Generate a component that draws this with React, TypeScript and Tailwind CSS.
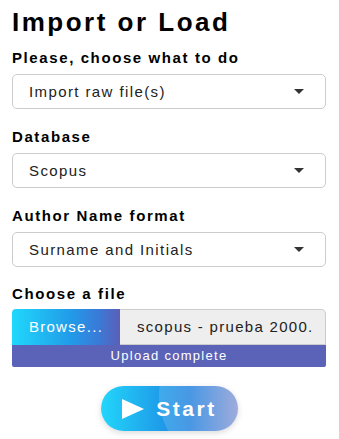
import * as React from "react";

const font = { fontFamily: '"Liberation Sans", Arial, sans-serif' };

function Caret() {
  return (
    <svg width="10" height="5" viewBox="0 0 10 5" className="shrink-0">
      <path d="M0 0 L10 0 L5 5 Z" fill="#333" />
    </svg>
  );
}

function SelectBox({ value }: { value: string }) {
  return (
    <div className="flex items-center justify-between h-[35px] rounded-[5px] border border-[#ccc] bg-white pl-[16px] pr-[21px]">
      <span className="text-[15px] tracking-[1.4px] text-[#222] leading-none">{value}</span>
      <Caret />
    </div>
  );
}

function Field({
  label,
  gap = "mb-[9px]",
  children,
}: {
  label: string;
  gap?: string;
  children: React.ReactNode;
}) {
  return (
    <div className="flex flex-col">
      <label className={`text-[15px] font-bold tracking-[1.6px] text-black leading-none ${gap}`}>
        {label}
      </label>
      {children}
    </div>
  );
}

export default function App() {
  return (
    <div style={font} className="w-[339px] h-[439px] bg-white pl-[12px] pr-[13px] pt-[9px] overflow-hidden">
      <h1 className="text-[26px] font-bold tracking-[2.5px] text-black leading-none mb-[15px]">
        Import or Load
      </h1>

      <div className="flex flex-col gap-[20px]">
        <Field label="Please, choose what to do">
          <SelectBox value="Import raw file(s)" />
        </Field>
        <Field label="Database">
          <SelectBox value="Scopus" />
        </Field>
        <Field label="Author Name format">
          <SelectBox value="Surname and Initials" />
        </Field>
      </div>

      <div className="mt-[19px]">
        <Field label="Choose a file" gap="mb-[8px]">
          <div className="flex flex-col">
            <div className="flex h-[36px]">
              <div className="w-[108px] shrink-0 flex items-center justify-center rounded-tl-[4px] bg-[linear-gradient(90deg,#1fd8fc_0%,#229ae8_55%,#3a7ad8_80%,#5b5fb6_100%)] text-white text-[15px] tracking-[1.3px]">
                Browse...
              </div>
              <div className="flex-1 min-w-0 flex items-center bg-[#eeeeee] border border-[#ccc] border-l-0 rounded-tr-[5px] pl-[17px] pr-[13px]">
                <span className="block overflow-hidden whitespace-nowrap text-[15px] tracking-[1.3px] text-[#222]">
                  scopus - prueba 2000.bib
                </span>
              </div>
            </div>
            <div className="h-[22px] flex items-center justify-center bg-[#5a63b8] text-white text-[13px] tracking-[1.3px] rounded-b-[2px]">
              Upload complete
            </div>
          </div>
        </Field>
      </div>

      <div className="flex justify-center mt-[19px] pl-[1px]">
        <button className="relative overflow-hidden w-[137px] h-[45px] rounded-full bg-[linear-gradient(90deg,#22d6fb_0%,#1f9ae8_45%,#2a86e0_65%,#8e9dd6_100%)] shadow-[0_2px_6px_rgba(0,0,0,0.15)] flex items-center justify-center gap-[12px] text-white">
          <span className="absolute left-[58px] top-[-60px] w-[140px] h-[140px] rounded-full bg-white/15" />
          <svg width="22" height="20" viewBox="0 0 22 20" className="relative">
            <path d="M0 0 L22 10 L0 20 Z" fill="white" />
          </svg>
          <span className="relative text-[21px] font-bold tracking-[2.5px] leading-none">Start</span>
        </button>
      </div>
    </div>
  );
}
